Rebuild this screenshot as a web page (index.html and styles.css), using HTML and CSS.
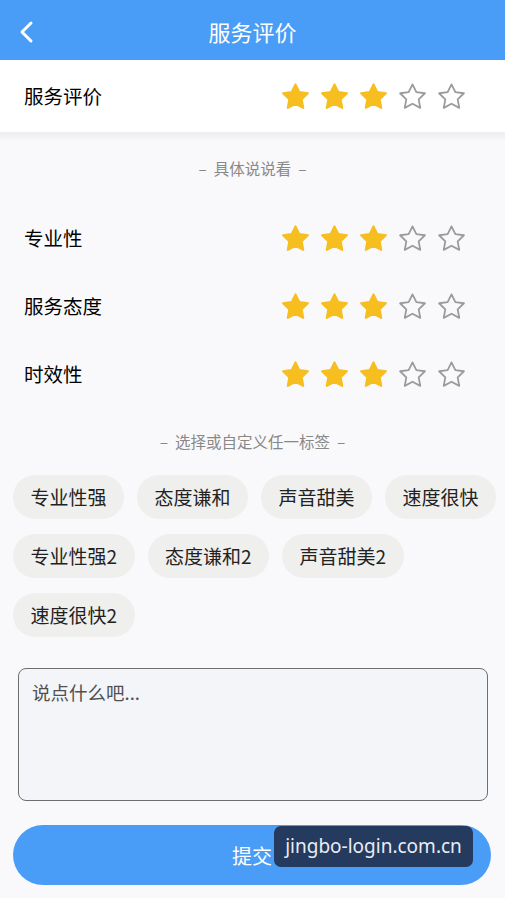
FILE: index.html
```html
<!DOCTYPE html>
<html lang="zh-CN">
<head>
<meta charset="utf-8">
<title>服务评价</title>
<link rel="stylesheet" href="styles.css">
</head>
<body>
<svg width="0" height="0" class="defs">
  <defs>
    <polygon id="star" points="12,2.6 15.0,8.6 21.6,9.5 16.8,14.2 18.0,20.8 12,17.6 6.0,20.8 7.2,14.2 2.4,9.5 9.0,8.6"/>
  </defs>
</svg>
<div class="page">
  <header class="topbar">
    <svg class="back" width="16" height="24" viewBox="0 0 16 24"><polyline points="12,3 3,12 12,21" fill="none" stroke="#fff" stroke-width="3" stroke-linecap="round" stroke-linejoin="round"/></svg>
    <h1 class="title">服务评价</h1>
  </header>

  <section class="card">
    <div class="rate-row main-row">
      <span class="label">服务评价</span>
      <div class="stars">
        <svg class="st on" viewBox="0 0 24 24"><use href="#star"/></svg>
        <svg class="st on" viewBox="0 0 24 24"><use href="#star"/></svg>
        <svg class="st on" viewBox="0 0 24 24"><use href="#star"/></svg>
        <svg class="st off" viewBox="0 0 24 24"><use href="#star"/></svg>
        <svg class="st off" viewBox="0 0 24 24"><use href="#star"/></svg>
      </div>
    </div>
  </section>
  <div class="band"></div>

  <div class="caption cap1">–&nbsp;&nbsp;具体说说看&nbsp;&nbsp;–</div>

  <div class="rate-row">
    <span class="label">专业性</span>
    <div class="stars">
      <svg class="st on" viewBox="0 0 24 24"><use href="#star"/></svg>
      <svg class="st on" viewBox="0 0 24 24"><use href="#star"/></svg>
      <svg class="st on" viewBox="0 0 24 24"><use href="#star"/></svg>
      <svg class="st off" viewBox="0 0 24 24"><use href="#star"/></svg>
      <svg class="st off" viewBox="0 0 24 24"><use href="#star"/></svg>
    </div>
  </div>
  <div class="rate-row">
    <span class="label">服务态度</span>
    <div class="stars">
      <svg class="st on" viewBox="0 0 24 24"><use href="#star"/></svg>
      <svg class="st on" viewBox="0 0 24 24"><use href="#star"/></svg>
      <svg class="st on" viewBox="0 0 24 24"><use href="#star"/></svg>
      <svg class="st off" viewBox="0 0 24 24"><use href="#star"/></svg>
      <svg class="st off" viewBox="0 0 24 24"><use href="#star"/></svg>
    </div>
  </div>
  <div class="rate-row">
    <span class="label">时效性</span>
    <div class="stars">
      <svg class="st on" viewBox="0 0 24 24"><use href="#star"/></svg>
      <svg class="st on" viewBox="0 0 24 24"><use href="#star"/></svg>
      <svg class="st on" viewBox="0 0 24 24"><use href="#star"/></svg>
      <svg class="st off" viewBox="0 0 24 24"><use href="#star"/></svg>
      <svg class="st off" viewBox="0 0 24 24"><use href="#star"/></svg>
    </div>
  </div>

  <div class="caption cap2">–&nbsp;&nbsp;选择或自定义任一标签&nbsp;&nbsp;–</div>

  <div class="tags">
    <span class="tag">专业性强</span>
    <span class="tag">态度谦和</span>
    <span class="tag">声音甜美</span>
    <span class="tag">速度很快</span>
    <span class="tag">专业性强2</span>
    <span class="tag">态度谦和2</span>
    <span class="tag">声音甜美2</span>
    <span class="tag">速度很快2</span>
  </div>

  <div class="comment">
    <textarea class="input" placeholder="说点什么吧..."></textarea>
  </div>

  <div class="submit-wrap">
    <button class="submit">提交</button>
    <div class="watermark">jingbo-login.com.cn</div>
  </div>
</div>
</body>
</html>
```

FILE: styles.css
```css
* { box-sizing: border-box; }
html, body {
  margin: 0;
  padding: 0;
  background: #f9f9fb;
  font-family: "Noto Sans CJK SC", "Noto Sans", sans-serif;
}
.defs { position: absolute; width: 0; height: 0; }
.page { width: 505px; min-height: 898px; background: #f9f9fb; }

.topbar {
  height: 60px;
  background: #4a9df7;
  display: flex;
  align-items: center;
  justify-content: center;
  position: relative;
}
.back { position: absolute; left: 19px; top: 20px; }
.title {
  margin: 0;
  color: #fff;
  font-size: 22px;
  font-weight: 400;
  line-height: 1;
  margin-top: 2px;
}

.card { background: #fff; }
.band {
  height: 8px;
  background: linear-gradient(#eeeef0, #f6f6f8);
}

.rate-row {
  height: 68px;
  display: flex;
  align-items: center;
  justify-content: space-between;
  padding-left: 24px;
  padding-right: 38px;
}
.main-row { height: 72px; }
.label { font-size: 19.5px; color: #000; line-height: 1; }
.stars { display: flex; gap: 8px; }
.st { width: 31px; height: 31px; display: block; }
.st.on { fill: #f6be1f; stroke: #f6be1f; stroke-width: 1.6; stroke-linejoin: round; }
.st.off { fill: none; stroke: #9b9b9b; stroke-width: 1.4; stroke-linejoin: round; }

.caption {
  text-align: center;
  font-size: 15.5px;
  line-height: 20px;
  color: #888;
}
.cap1 { padding-top: 18px; padding-bottom: 26px; }
.cap2 { padding-top: 23px; padding-bottom: 24px; }

.tags {
  display: flex;
  flex-wrap: wrap;
  gap: 15px 13px;
  padding: 0 0 0 13px;
}
.tag {
  height: 44px;
  line-height: 44px;
  padding: 0 17.5px;
  border-radius: 22px;
  background: #efefed;
  color: #222;
  font-size: 19px;
  white-space: nowrap;
}

.comment { padding: 31px 17px 0 18px; }
.input {
  display: block;
  width: 100%;
  height: 133px;
  border: 1px solid #6e6e6e;
  border-radius: 8px;
  background: #f3f5f8;
  padding: 10px 13px;
  font-family: "Noto Sans CJK SC", "Noto Sans", sans-serif;
  font-size: 18.5px;
  color: #333;
  resize: none;
  outline: none;
}
.input::placeholder { color: #505050; opacity: 1; }

.submit-wrap {
  position: relative;
  padding: 24px 14px 0 13px;
}
.submit {
  display: block;
  width: 100%;
  height: 60px;
  border: 0;
  border-radius: 30px;
  background: #4a9df7;
  color: #fff;
  font-family: "Noto Sans CJK SC", "Noto Sans", sans-serif;
  font-size: 20px;
}
.watermark {
  position: absolute;
  left: 274px;
  top: 25px;
  width: 199px;
  height: 41px;
  border-radius: 7px;
  background: #243a5f;
  color: #e9edf3;
  font-family: "Noto Sans", "Open Sans", sans-serif;
  font-size: 19px;
  line-height: 41px;
  text-align: center;
}
```
